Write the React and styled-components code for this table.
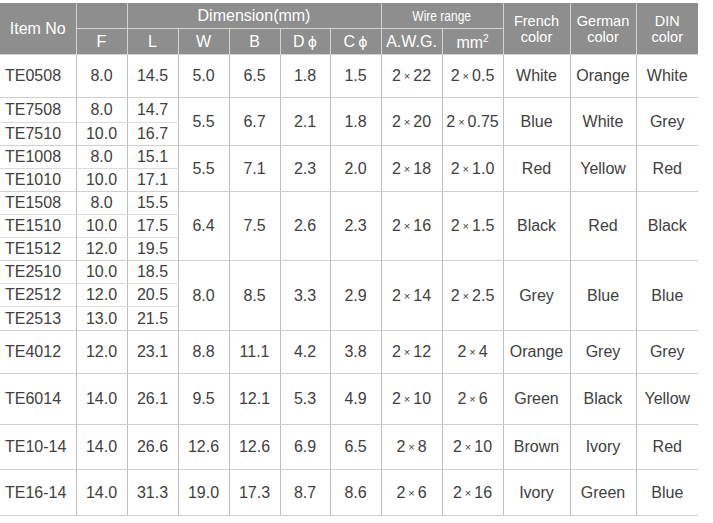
import React from "react";
import styled, { createGlobalStyle } from "styled-components";

const GlobalStyle = createGlobalStyle`
  html, body {
    margin: 0;
    padding: 0;
    background: #ffffff;
  }
  body {
    font-family: "Liberation Sans", Arial, sans-serif;
  }
`;

const Page = styled.div`
  width: 713px;
  height: 523px;
  padding-top: 3px;
  box-sizing: border-box;
  background: #ffffff;
`;

const Table = styled.table`
  width: 698px;
  table-layout: fixed;
  border-collapse: collapse;
  font-size: 16px;
  color: #404040;
  border-bottom: 1px solid #d4d4d4;
`;

const Head = styled.th`
  background: #8e8e8e;
  color: #ffffff;
  font-weight: normal;
  font-size: ${(p) => p.$size || 16}px;
  line-height: ${(p) => (p.$size ? 16 : 18)}px;
  height: ${(p) => p.$h || 24}px;
  padding: 0;
  text-align: center;
  vertical-align: middle;
  border: 1px solid #d3d3d3;
  border-top: none;
  &:first-child {
    border-left: none;
  }
  &:last-child {
    border-right: none;
  }
`;

const Narrow = styled.span`
  display: inline-block;
  transform: scaleX(0.8);
  font-size: 15px;
`;

const Phi = styled.span`
  font-family: "DejaVu Sans", sans-serif;
  font-size: 14px;
  margin-left: 3px;
`;

const Cell = styled.td`
  height: ${(p) => p.$h}px;
  padding: 0 ${(p) => (p.$left ? 5 : 0)}px;
  text-align: ${(p) => (p.$left ? "left" : "center")};
  vertical-align: middle;
  white-space: nowrap;
  border-left: 1px solid #bdbdbd;
  border-right: 1px solid #bdbdbd;
  border-bottom: 1px solid ${(p) => (p.$sub ? "#dcdcdc" : "#cfcfcf")};
  &:first-child {
    border-left: none;
  }
  &:last-child {
    border-right: none;
  }
`;

const Times = styled.span`
  font-size: 11px;
  margin: 0 3px;
  position: relative;
  top: -1px;
`;

const widths = [76, 51, 51, 51, 51, 50, 51, 61, 61, 67, 66, 62];

const groups = [
  {
    items: [["TE0508", "8.0", "14.5"]],
    heights: [42],
    shared: ["5.0", "6.5", "1.8", "1.5", "22", "0.5", "White", "Orange", "White"],
  },
  {
    items: [
      ["TE7508", "8.0", "14.7"],
      ["TE7510", "10.0", "16.7"],
    ],
    heights: [24, 22],
    shared: ["5.5", "6.7", "2.1", "1.8", "20", "0.75", "Blue", "White", "Grey"],
  },
  {
    items: [
      ["TE1008", "8.0", "15.1"],
      ["TE1010", "10.0", "17.1"],
    ],
    heights: [22, 22],
    shared: ["5.5", "7.1", "2.3", "2.0", "18", "1.0", "Red", "Yellow", "Red"],
  },
  {
    items: [
      ["TE1508", "8.0", "15.5"],
      ["TE1510", "10.0", "17.5"],
      ["TE1512", "12.0", "19.5"],
    ],
    heights: [22, 22, 22],
    shared: ["6.4", "7.5", "2.6", "2.3", "16", "1.5", "Black", "Red", "Black"],
  },
  {
    items: [
      ["TE2510", "10.0", "18.5"],
      ["TE2512", "12.0", "20.5"],
      ["TE2513", "13.0", "21.5"],
    ],
    heights: [22, 22, 23],
    shared: ["8.0", "8.5", "3.3", "2.9", "14", "2.5", "Grey", "Blue", "Blue"],
  },
  {
    items: [["TE4012", "12.0", "23.1"]],
    heights: [42],
    shared: ["8.8", "11.1", "4.2", "3.8", "12", "4", "Orange", "Grey", "Grey"],
  },
  {
    items: [["TE6014", "14.0", "26.1"]],
    heights: [50],
    shared: ["9.5", "12.1", "5.3", "4.9", "10", "6", "Green", "Black", "Yellow"],
  },
  {
    items: [["TE10-14", "14.0", "26.6"]],
    heights: [44],
    shared: ["12.6", "12.6", "6.9", "6.5", "8", "10", "Brown", "Ivory", "Red"],
  },
  {
    items: [["TE16-14", "14.0", "31.3"]],
    heights: [45],
    shared: ["19.0", "17.3", "8.7", "8.6", "6", "16", "Ivory", "Green", "Blue"],
  },
];

const Mult = ({ n }) => (
  <>
    2<Times>×</Times>
    {n}
  </>
);

const GroupRows = ({ group }) => {
  const span = group.items.length;
  const [w, b, d, c, awg, mm, fr, de, din] = group.shared;
  return group.items.map(([no, f, l], i) => {
    const h = group.heights[i];
    const sub = i < span - 1;
    return (
      <tr key={no}>
        <Cell $h={h} $left $sub={sub}>{no}</Cell>
        <Cell $h={h} $sub={sub}>{f}</Cell>
        <Cell $h={h} $sub={sub}>{l}</Cell>
        {i === 0 && (
          <>
            <Cell rowSpan={span}>{w}</Cell>
            <Cell rowSpan={span}>{b}</Cell>
            <Cell rowSpan={span}>{d}</Cell>
            <Cell rowSpan={span}>{c}</Cell>
            <Cell rowSpan={span}><Mult n={awg} /></Cell>
            <Cell rowSpan={span}><Mult n={mm} /></Cell>
            <Cell rowSpan={span}>{fr}</Cell>
            <Cell rowSpan={span}>{de}</Cell>
            <Cell rowSpan={span}>{din}</Cell>
          </>
        )}
      </tr>
    );
  });
};

export default function App() {
  return (
    <Page>
      <GlobalStyle />
      <Table>
        <colgroup>
          {widths.map((w, i) => (
            <col key={i} style={{ width: w }} />
          ))}
        </colgroup>
        <thead>
          <tr>
            <Head rowSpan={2}>Item No</Head>
            <Head $h={25}></Head>
            <Head colSpan={5} $h={25}>Dimension(mm)</Head>
            <Head colSpan={2} $h={25}><Narrow>Wire range</Narrow></Head>
            <Head rowSpan={2} $size={14.5}>French<br />color</Head>
            <Head rowSpan={2} $size={14.5}>German<br />color</Head>
            <Head rowSpan={2} $size={14.5}>DIN<br />color</Head>
          </tr>
          <tr>
            <Head $h={25}>F</Head>
            <Head $h={25}>L</Head>
            <Head $h={25}>W</Head>
            <Head $h={25}>B</Head>
            <Head $h={25}>D<Phi>ϕ</Phi></Head>
            <Head $h={25}>C<Phi>ϕ</Phi></Head>
            <Head $h={25}>A.W.G.</Head>
            <Head $h={25}>mm<sup style={{ fontSize: 10 }}>2</sup></Head>
          </tr>
        </thead>
        <tbody>
          {groups.map((g) => (
            <GroupRows key={g.items[0][0]} group={g} />
          ))}
        </tbody>
      </Table>
    </Page>
  );
}
